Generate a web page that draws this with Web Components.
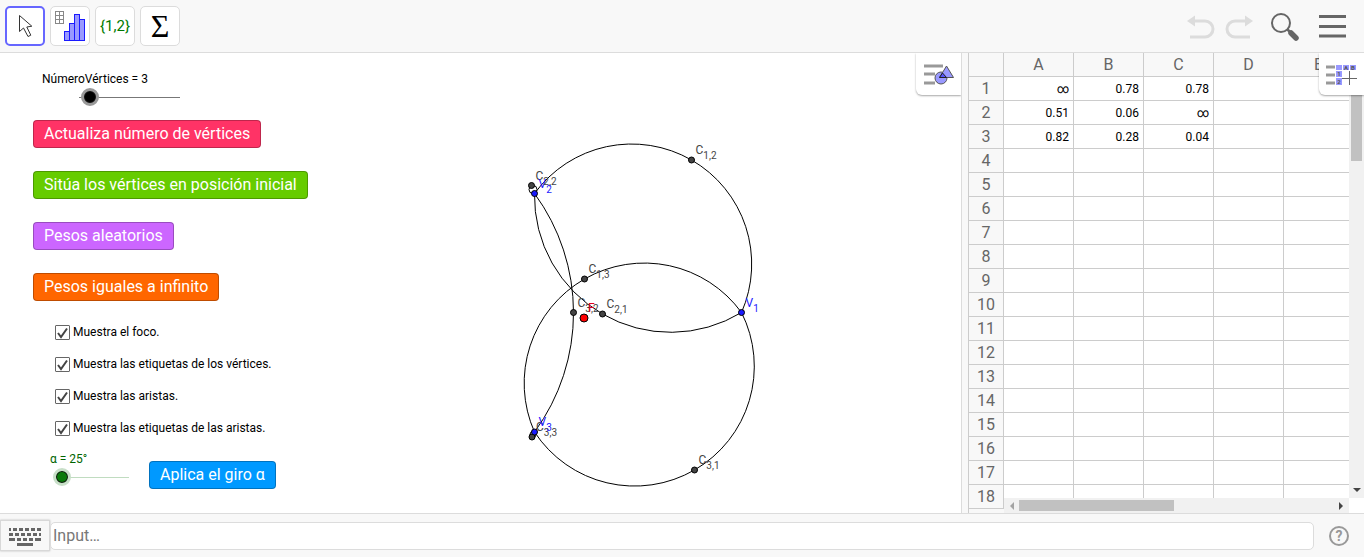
<!DOCTYPE html>
<html lang="es">
<head>
<meta charset="utf-8">
<title>GeoGebra</title>
<style>
  body {
    margin: 0;
    background: #fff;
    font-family: Roboto, "Liberation Sans", sans-serif;
  }
</style>
</head>
<body>
<geo-app></geo-app>

<script>
const ICONS = {
  move: `<svg width="36" height="36" viewBox="0 0 36 36">
    <path d="M12.5 7.500V23.500l4-3.500 4.500 8.500 2.800-1.300-4-8.200 5-.8z" fill="#fff" stroke="#333" stroke-width="1"/></svg>`,
  chart: `<svg width="38" height="38" viewBox="0 0 38 38">
    <g fill="none" stroke="#888"><rect x="4.500" y="4.500" width="8" height="12"/><path d="M8.500 4.500v12M4.500 8.500h8M4.500 12.500h8"/></g>
    <g fill="#9999ff" stroke="#1a1aff"><rect x="13.500" y="24.500" width="5" height="9"/><rect x="18.500" y="16.500" width="5" height="17"/>
    <rect x="23.500" y="7.500" width="5" height="26"/><rect x="28.500" y="12.500" width="5" height="21"/></g></svg>`,
  undo: `<svg width="30" height="26" viewBox="0 0 30 26">
    <path d="M7 8h12a8 8 0 0 1 0 16H4" fill="none" stroke="#dcdcdc" stroke-width="3"/><path d="M1 8L9 2.500v11z" fill="#dcdcdc"/></svg>`,
  redo: `<svg width="30" height="26" viewBox="0 0 30 26">
    <path d="M23 8H11a8 8 0 0 0 0 16h15" fill="none" stroke="#dcdcdc" stroke-width="3"/><path d="M29 8L21 2.500v11z" fill="#dcdcdc"/></svg>`,
  search: `<svg width="30" height="30" viewBox="0 0 30 30">
    <circle cx="11" cy="12" r="9" fill="none" stroke="#666" stroke-width="2"/>
    <path d="M17 18l4 4" stroke="#666" stroke-width="2.500"/><path d="M21 22l5 5" stroke="#666" stroke-width="5.500" stroke-linecap="round"/></svg>`,
  menu: `<svg width="28" height="24" viewBox="0 0 28 24"><path d="M0 2.500h27M0 12.500h27M0 22h27" stroke="#666" stroke-width="3"/></svg>`,
  graphics: `<svg width="32" height="24" viewBox="0 0 32 24">
    <path d="M1 3h19M1 11h11M1 20h11" stroke="#999" stroke-width="3"/>
    <circle cx="18" cy="15" r="6" fill="#9999ff" stroke="#555" stroke-width="1"/>
    <path d="M23.500 3l7 11.500h-14z" fill="#9999ff" stroke="#555"/><path d="M19.500 10l4 4.500h-7z" fill="#5555ff" stroke="#222"/></svg>`,
  sheet: `<svg width="34" height="24" viewBox="0 0 34 24">
    <path d="M1 4h9M1 12h9M1 20h9" stroke="#999" stroke-width="3"/>
    <path d="M11 2h6v5h-6zM18 2h6v5h-6zM25 2h6v5h-6zM11 8h6v6h-6zM11 15h6v7h-6z" fill="#9999ff"/>
    <path d="M24.500 8v14M17 15.500h15" stroke="#666" stroke-width="1"/>
    <g font-family="Roboto, sans-serif" font-size="6" font-weight="bold" fill="#555" text-anchor="middle">
    <text x="21" y="7">A</text><text x="28" y="7">B</text><text x="14" y="13">1</text><text x="14" y="21">2</text></g></svg>`,
  keyboard: `<svg width="34" height="20" viewBox="0 0 34 20">
    <g stroke="#666" stroke-width="3" fill="none"><path d="M1 3.500h32" stroke-dasharray="2 2 4 2 4 2 4 2 4 2 4"/>
    <path d="M1 8.500h32" stroke-dasharray="4 2 4 2 4 2 4 2 4 2 2"/><path d="M1 13.500h32" stroke-dasharray="6 2 4 2 4 2 4 2 6"/>
    <path d="M9 18.500h16"/></g></svg>`,
};

class ToolButton extends HTMLElement {
  constructor() {
    super();
    this.attachShadow({ mode: "open" });
  }
  connectedCallback() {
    const icon = ICONS[this.getAttribute("icon")] || "";
    this.shadowRoot.innerHTML = `
      <style>
        :host { display: block; }
        button {
          display: flex;
          align-items: center;
          justify-content: center;
          box-sizing: border-box;
          width: 40px;
          height: 40px;
          padding: 0;
          border: 1px solid #dcdcdc;
          border-radius: 5px;
          background: #fff;
          color: inherit;
          font: inherit;
        }
        :host([selected]) button { border: 2px solid #6666ff; }
        :host([plain]) button { width: auto; border: 0; background: none; }
        svg { display: block; flex: none; }
      </style>
      <button type="button" aria-label="${this.getAttribute("label")}">${icon}<slot></slot></button>`;
  }
}
customElements.define("tool-button", ToolButton);

class TopToolbar extends HTMLElement {
  constructor() {
    super();
    this.attachShadow({ mode: "open" });
    this.shadowRoot.innerHTML = `
      <style>
        :host {
          display: flex;
          align-items: center;
          justify-content: space-between;
          box-sizing: border-box;
          height: 53px;
          padding: 0 17px 0 5px;
          border-bottom: 1px solid #dcdcdc;
          background: #f8f8f8;
        }
        div { display: flex; align-items: center; gap: 5px; }
        .right { gap: 8px; }
        .list { font: 15px Roboto, sans-serif; color: #007a00; }
        .sum { font: 32px "Liberation Serif", serif; color: #000; }
        .search { padding: 0 11px 0 8px; }
      </style>
      <div>
        <tool-button icon="move" label="Move" selected></tool-button>
        <tool-button icon="chart" label="One variable analysis"></tool-button>
        <tool-button class="list" label="List">{1,2}</tool-button>
        <tool-button class="sum" label="Sum">Σ</tool-button>
      </div>
      <div class="right">
        <tool-button plain icon="undo" label="Undo"></tool-button>
        <tool-button plain icon="redo" label="Redo"></tool-button>
        <tool-button plain class="search" icon="search" label="Search"></tool-button>
        <tool-button plain icon="menu" label="Menu"></tool-button>
      </div>`;
  }
}
customElements.define("top-toolbar", TopToolbar);

// button that hangs from the top right corner of a view
class StyleButton extends HTMLElement {
  constructor() {
    super();
    this.attachShadow({ mode: "open" });
  }
  connectedCallback() {
    this.shadowRoot.innerHTML = `
      <style>
        :host { display: block; position: absolute; top: 0; right: 0; z-index: 2; }
        button {
          display: flex;
          align-items: center;
          justify-content: center;
          width: 45px;
          height: 42px;
          padding: 2px 0 0;
          border: 0;
          border-radius: 0 0 0 6px;
          background: #fff;
          box-shadow: 0 1px 2px rgba(0, 0, 0, .35);
        }
        svg { flex: none; }
      </style>
      <button type="button" aria-label="${this.getAttribute("label")}">${ICONS[this.getAttribute("icon")]}</button>`;
  }
}
customElements.define("style-button", StyleButton);

class PlotSlider extends HTMLElement {
  constructor() {
    super();
    this.attachShadow({ mode: "open" });
  }
  connectedCallback() {
    this.shadowRoot.innerHTML = `
      <style>
        :host { display: flex; flex-direction: column; gap: 2px; font-size: 12px; line-height: 16px; }
        input {
          appearance: none;
          width: var(--slider-width);
          height: 16px;
          margin: 0 0 0 var(--slider-indent);
          background: linear-gradient(var(--track), var(--track)) center / 100% 1px no-repeat;
        }
        input::-webkit-slider-thumb {
          appearance: none;
          box-sizing: border-box;
          width: 18px;
          height: 18px;
          border: 3px solid var(--ring);
          border-radius: 50%;
          background: var(--thumb);
          box-shadow: inset 0 0 0 1px #111;
        }
      </style>
      <label for="s"><slot></slot></label>
      <input id="s" type="range" min="0" max="${this.getAttribute("max")}" value="${this.getAttribute("value")}">`;
  }
}
customElements.define("plot-slider", PlotSlider);

class PlotButton extends HTMLElement {
  constructor() {
    super();
    this.attachShadow({ mode: "open" });
    this.shadowRoot.innerHTML = `
      <style>
        :host { display: block; }
        button {
          display: block;
          box-sizing: border-box;
          height: 28px;
          padding: 0 10px;
          border: 1px solid rgba(0, 0, 0, .25);
          border-radius: 4px;
          background: var(--color);
          color: #fff;
          font: 16px/24px Roboto, sans-serif;
          white-space: nowrap;
        }
      </style>
      <button type="button"><slot></slot></button>`;
  }
}
customElements.define("plot-button", PlotButton);

class PlotCheck extends HTMLElement {
  constructor() {
    super();
    this.attachShadow({ mode: "open" });
    this.shadowRoot.innerHTML = `
      <style>
        :host { display: block; font-size: 12px; line-height: 15px; }
        label { display: flex; align-items: center; gap: 3px; }
        span { display: grid; }
        input, svg { grid-area: 1 / 1; }
        input {
          appearance: none;
          box-sizing: border-box;
          width: 15px;
          height: 15px;
          margin: 0;
          border: 1px solid #666;
          border-radius: 1px;
          background: #fff;
        }
        svg { display: none; pointer-events: none; }
        input:checked + svg { display: block; }
      </style>
      <label>
        <span>
          <input type="checkbox" checked>
          <svg width="15" height="15"><path d="M3 8l3 4 6-8.500" fill="none" stroke="#444" stroke-width="2"/></svg>
        </span>
        <slot></slot>
      </label>`;
  }
}
customElements.define("plot-check", PlotCheck);

// points of the construction, in pixels of the graphics view
const V1 = [741.5, 259.5], V2 = [534.5, 140.5], V3 = [534.5, 379];
const POINTS = [
  { at: [691.5, 107], name: "C", sub: "1,2" },
  { at: [584.5, 226], name: "C", sub: "1,3" },
  { at: [531.5, 132.5], name: "C", sub: "2,2" },
  { at: [602.5, 261], name: "C", sub: "2,1" },
  { at: [573.5, 259.5], name: "C", sub: "3,2" },
  { at: [694.5, 417], name: "C", sub: "3,1" },
  { at: [532, 384], name: "C", sub: "3,3" },
  { at: [584, 265], name: "F", color: "#ff0000", text: "#e00020", r: 4 },
  { at: V1, name: "V", sub: "1", color: "#1a1aff" },
  { at: V2, name: "V", sub: "2", color: "#1a1aff" },
  { at: V3, name: "V", sub: "3", color: "#1a1aff" },
];
const ARCS = [
  [V2, POINTS[0].at, V1],
  [V2, POINTS[3].at, V1],
  [V1, POINTS[1].at, V3],
  [V1, POINTS[5].at, V3],
  [V2, POINTS[4].at, V3],
];

// path of the circular arc from a to c that passes through b
function arcPath(a, b, c) {
  const ab = Math.hypot(b[0] - a[0], b[1] - a[1]);
  const bc = Math.hypot(c[0] - b[0], c[1] - b[1]);
  const ca = Math.hypot(a[0] - c[0], a[1] - c[1]);
  const cross = (b[0] - a[0]) * (c[1] - a[1]) - (b[1] - a[1]) * (c[0] - a[0]);
  const r = (ab * bc * ca) / (2 * Math.abs(cross));
  const sweep = cross > 0 ? 1 : 0;
  return `M${a}A${r} ${r} 0 0 ${sweep} ${b}A${r} ${r} 0 0 ${sweep} ${c}`;
}

class GraphicsView extends HTMLElement {
  constructor() {
    super();
    this.attachShadow({ mode: "open" });
    this.render();
  }

  render() {
    const arcs = ARCS.map((arc) => `<path d="${arcPath(...arc)}"/>`).join("");
    const dots = POINTS.map((p) =>
      `<circle cx="${p.at[0]}" cy="${p.at[1]}" r="${p.r || 3}" fill="${p.color || "#444"}"/>`).join("");
    const labels = POINTS.map((p) =>
      `<text x="${p.at[0] + 4}" y="${p.at[1] - 6}" fill="${p.text || p.color || "#444"}">${p.name}` +
      (p.sub ? `<tspan dy="5" font-size="10">${p.sub}</tspan>` : "") + `</text>`).join("");

    this.shadowRoot.innerHTML = `
      <style>
        :host { display: grid; position: relative; overflow: hidden; background: #fff; }
        .plot { grid-area: 1 / 1; width: 100%; height: 100%; min-height: 0; }
        .plot text { font-size: 12px; }
        .controls {
          grid-area: 1 / 1;
          display: flex;
          flex-direction: column;
          align-items: flex-start;
          justify-self: start;
          padding: 18px 0 0 33px;
          z-index: 1;
        }
        .count {
          --slider-width: 101px;
          --slider-indent: 37px;
          --track: #777;
          --ring: #999;
          --thumb: #000;
          padding: 0 0 15px 9px;
        }
        .buttons { display: flex; flex-direction: column; align-items: flex-start; gap: 23px; }
        .checks { display: flex; flex-direction: column; gap: 17px; padding: 24px 0 0 22px; }
        .turn { display: flex; align-items: flex-end; gap: 20px; padding: 15px 0 0 17px; }
        .angle {
          --slider-width: 76px;
          --slider-indent: 3px;
          --track: #c0dcc0;
          --ring: #c8dfc8;
          --thumb: #0a7a0a;
          padding-bottom: 4px;
          color: #006400;
        }
      </style>
      <svg class="plot">
        <g fill="none" stroke="#000">${arcs}<circle cx="533" cy="136.500" r="4"/><circle cx="533" cy="381.500" r="3"/></g>
        <g stroke="#000">${dots}</g>
        <g>${labels}</g>
      </svg>
      <div class="controls">
        <plot-slider class="count" max="100" value="3">NúmeroVértices = 3</plot-slider>
        <div class="buttons">
          <plot-button style="--color: #ff3366">Actualiza número de vértices</plot-button>
          <plot-button style="--color: #66cc00">Sitúa los vértices en posición inicial</plot-button>
          <plot-button style="--color: #cc66ff">Pesos aleatorios</plot-button>
          <plot-button style="--color: #ff6600">Pesos iguales a infinito</plot-button>
        </div>
        <div class="checks">
          <plot-check>Muestra el foco.</plot-check>
          <plot-check>Muestra las etiquetas de los vértices.</plot-check>
          <plot-check>Muestra las aristas.</plot-check>
          <plot-check>Muestra las etiquetas de las aristas.</plot-check>
        </div>
        <div class="turn">
          <plot-slider class="angle" max="360" value="0">α = 25°</plot-slider>
          <plot-button style="--color: #0099ff">Aplica el giro α</plot-button>
        </div>
      </div>
      <style-button icon="graphics" label="Graphics style bar"></style-button>`;
  }
}
customElements.define("graphics-view", GraphicsView);

const CELLS = [
  ["∞", "0.78", "0.78"],
  ["0.51", "0.06", "∞"],
  ["0.82", "0.28", "0.04"],
];

class SheetView extends HTMLElement {
  constructor() {
    super();
    this.attachShadow({ mode: "open" });
    this.render();
  }

  render() {
    const columns = ["A", "B", "C", "D", "E"];
    let rows = "";
    for (let i = 0; i < 18; i++) {
      const cells = columns.map((_, j) => `<td>${(CELLS[i] && CELLS[i][j]) || ""}</td>`).join("");
      rows += `<tr><th scope="row">${i + 1}</th>${cells}</tr>`;
    }

    this.shadowRoot.innerHTML = `
      <style>
        :host {
          display: grid;
          grid-template-columns: minmax(0, 1fr) 15px;
          grid-template-rows: minmax(0, 1fr) 15px;
          position: relative;
          overflow: hidden;
          border-left: 1px solid #ccc;
          background: #fff;
        }
        .cells {
          grid-area: 1 / 1 / 3 / 2;
          overflow: hidden;
          background: #f8f8f8;
        }
        table { width: 385px; table-layout: fixed; border-collapse: separate; border-spacing: 0; }
        th, td {
          box-sizing: border-box;
          width: 70px;
          height: 24px;
          padding: 1px 0 0;
          border: 0 solid #ccc;
          border-width: 0 1px 1px 0;
          line-height: 22px;
        }
        th { background: #f8f8f8; color: #666; font-size: 16px; font-weight: normal; }
        th:first-child, td:first-child { width: 35px; }
        td { padding-right: 4px; background: #fff; font-size: 12px; text-align: right; }
        .bar { display: flex; align-items: center; justify-content: space-between; background: #f1f1f1; }
        .across { grid-area: 2 / 1; margin-left: 35px; padding: 0 5px; }
        .down { grid-area: 1 / 2; flex-direction: column; padding-bottom: 5px; }
        .across i { width: 155px; height: 11px; margin: 0 auto 0 5px; background: #c1c1c1; }
        .down i { width: 11px; height: 93px; margin-top: 15px; background: #c1c1c1; }
        svg { display: block; }
      </style>
      <div class="cells">
        <table>
          <thead><tr><th></th>${columns.map((c) => `<th scope="col">${c}</th>`).join("")}</tr></thead>
          <tbody>${rows}</tbody>
        </table>
      </div>
      <div class="bar down"><i></i><svg width="8" height="5"><path d="M0 0h8L4 4z" fill="#444"/></svg></div>
      <div class="bar across">
        <svg width="5" height="8"><path d="M5 0v8L1 4z" fill="#a3a3a3"/></svg><i></i>
        <svg width="5" height="8"><path d="M0 0v8l4-4z" fill="#444"/></svg>
      </div>
      <style-button icon="sheet" label="Spreadsheet style bar"></style-button>`;
  }
}
customElements.define("sheet-view", SheetView);

class InputBar extends HTMLElement {
  constructor() {
    super();
    this.attachShadow({ mode: "open" });
    this.shadowRoot.innerHTML = `
      <style>
        :host {
          display: flex;
          align-items: center;
          box-sizing: border-box;
          height: 44px;
          border-top: 1px solid #dcdcdc;
          background: #f8f8f8;
        }
        .keys {
          display: flex;
          align-items: center;
          justify-content: center;
          box-sizing: border-box;
          width: 50px;
          height: 31px;
          padding: 0;
          border: 1px solid #d8d8d8;
          background: #f8f8f8;
          box-shadow: 0 0 2px rgba(0, 0, 0, .25);
        }
        input {
          flex: 1;
          box-sizing: border-box;
          min-width: 0;
          height: 28px;
          padding: 0 2px;
          border: 1px solid #dcdcdc;
          border-radius: 5px;
          background: #fff;
          font: 16px Roboto, sans-serif;
        }
        input::placeholder { color: #777; }
        .help {
          box-sizing: border-box;
          width: 20px;
          height: 20px;
          margin: 0 15px;
          padding: 0;
          border: 2px solid #999;
          border-radius: 50%;
          background: none;
          color: #999;
          font: bold 14px/16px Roboto, sans-serif;
        }
      </style>
      <button class="keys" type="button" aria-label="Keyboard">${ICONS.keyboard}</button>
      <input type="text" aria-label="Input" placeholder="Input…">
      <button class="help" type="button" aria-label="Help">?</button>`;
  }
}
customElements.define("input-bar", InputBar);

class GeoApp extends HTMLElement {
  constructor() {
    super();
    this.attachShadow({ mode: "open" });
    this.shadowRoot.innerHTML = `
      <style>
        :host {
          display: flex;
          flex-direction: column;
          box-sizing: border-box;
          height: 100vh;
          padding: 0 2px 1px 0;
        }
        main {
          flex: 1;
          display: grid;
          grid-template-columns: minmax(0, 1fr) 7px 396px;
          grid-template-rows: minmax(0, 1fr);
          min-height: 0;
        }
        .splitter { box-sizing: border-box; border-left: 1px solid #dcdcdc; background: #f8f8f8; }
      </style>
      <top-toolbar></top-toolbar>
      <main>
        <graphics-view></graphics-view>
        <div class="splitter"></div>
        <sheet-view></sheet-view>
      </main>
      <input-bar></input-bar>`;
  }
}
customElements.define("geo-app", GeoApp);
</script>
</body>
</html>
